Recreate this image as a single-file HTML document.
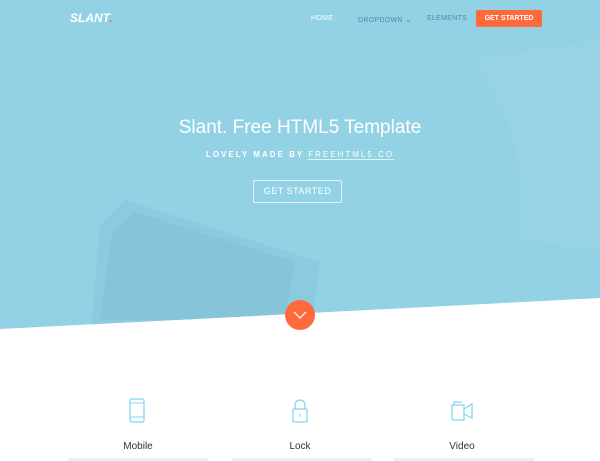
<!DOCTYPE html>
<html><head><style>
body{margin:0;width:600px;height:461px;overflow:hidden;background:#fff;font-family:"Liberation Sans",sans-serif;position:relative}
.hero{position:absolute;left:0;top:0;width:600px;height:340px;background:#93d1e4;clip-path:polygon(0 0,600px 0,600px 298px,0 329px)}
.t{position:absolute;color:#fff}
.nav{position:absolute;top:15px;font-size:7px;letter-spacing:.3px;color:#4f8ea6}
.feat{position:absolute;top:441px;width:160px;text-align:center;font-size:10px;color:#333}
.lor{position:absolute;top:458px;width:140px;height:3px;background:#eee}
</style></head><body>
<div class="hero">
<svg width="600" height="340" style="position:absolute;left:0;top:0">
<polygon points="100,225 125,200 320,262 310,340 90,340" fill="#8bcadf"/>
<polygon points="112,232 135,212 295,262 285,320 100,320" fill="#85c4d9"/>
<path d="M470,60 Q530,120 520,240 L600,250 L600,40 Z" fill="#97d3e5"/>
</svg>
</div>
<div class="t" style="left:70px;top:11px;font-size:12px;font-weight:bold;font-style:italic">SLANT<span style="color:#ff6a3c">.</span></div>
<div class="nav" style="left:311px;color:#fff">HOME</div>
<div class="nav" style="left:358px">DROPDOWN <span style="font-size:8px">⌄</span></div>
<div class="nav" style="left:427px">ELEMENTS</div>
<div style="position:absolute;left:476px;top:10px;width:66px;height:17px;background:#ff6a3c;border-radius:2px;color:#fff;font-size:7px;font-weight:bold;text-align:center;line-height:17px">GET STARTED</div>
<div class="t" style="left:0;width:600px;text-align:center;top:117px;font-size:19px">Slant. Free HTML5 Template</div>
<div class="t" style="left:0;width:600px;text-align:center;top:150px;font-size:8px;font-weight:bold;letter-spacing:2px">LOVELY MADE BY <span style="font-weight:normal;border-bottom:1px solid #cfe">FREEHTML5.CO</span></div>
<div class="t" style="left:253px;top:180px;width:87px;height:21px;border:1px solid #e0f3f9;border-radius:2px;text-align:center;line-height:21px;font-size:9px;letter-spacing:.5px">GET STARTED</div>
<div style="position:absolute;left:285px;top:300px;width:30px;height:30px;border-radius:50%;background:#ff6a3c"></div>
<svg style="position:absolute;left:293px;top:311px" width="14" height="8"><polyline points="1,1 7,7 13,1" fill="none" stroke="#fff" stroke-width="1.2"/></svg>
<svg style="position:absolute;left:128px;top:398px" width="20" height="26"><rect x="2" y="1" width="14" height="23" rx="2" fill="none" stroke="#7fd4ee" stroke-width="1.2"/><line x1="2" y1="5" x2="16" y2="5" stroke="#7fd4ee"/><line x1="2" y1="19" x2="16" y2="19" stroke="#7fd4ee"/></svg>
<svg style="position:absolute;left:290px;top:398px" width="20" height="26"><path d="M5,11V7a5,5 0 0 1 10,0v4" fill="none" stroke="#7fd4ee" stroke-width="1.2"/><rect x="3" y="11" width="14" height="13" rx="1" fill="none" stroke="#7fd4ee" stroke-width="1.2"/><line x1="10" y1="16" x2="10" y2="19" stroke="#7fd4ee"/></svg>
<svg style="position:absolute;left:450px;top:400px" width="26" height="22"><path d="M2,5h12v15h-10a2,2 0 0 1 -2,-2z M14,9l8,-5v14l-8,-4 M4,5v-3h8" fill="none" stroke="#7fd4ee" stroke-width="1.2"/></svg>
<div class="feat" style="left:58px">Mobile</div>
<div class="feat" style="left:220px">Lock</div>
<div class="feat" style="left:382px">Video</div>
<div class="lor" style="left:68px"></div><div class="lor" style="left:232px"></div><div class="lor" style="left:394px"></div>
</body></html>
